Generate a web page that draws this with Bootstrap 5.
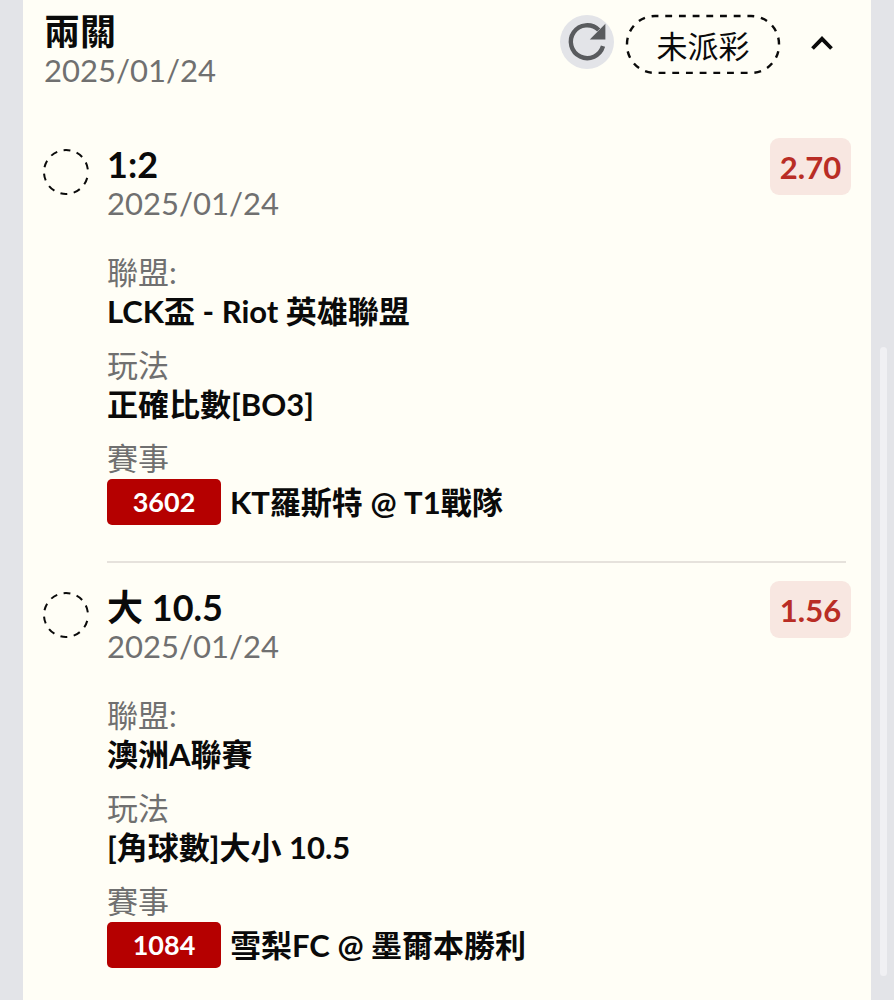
<!DOCTYPE html>
<html lang="zh-Hant">
<head>
<meta charset="utf-8">
<meta name="viewport" content="width=device-width, initial-scale=1">
<title>兩關</title>
<link href="https://cdn.jsdelivr.net/npm/bootstrap@5.3.0/dist/css/bootstrap.min.css" rel="stylesheet">
<style>
  body { background: #e3e4e8; color: #0a0a0a; font-family: Lato, "Noto Sans CJK TC", sans-serif; font-size: 31px; line-height: 38px; }
  .slip { background: #fffef6; min-height: 100vh; margin: 0 23px; padding: 12px 20px 32px; }
  .slip-head { margin: 0 0 49px 1px; }
  .slip-actions { margin-right: 7px; gap: 11px; padding-top: 2px; }
  .heading { font-size: 36px; line-height: 39px; font-weight: 700; margin: 0; }
  .muted-text { color: #707070; }
  .refresh { width: 54px; height: 54px; margin-bottom: 4px; background: #e3e4e8; }
  .status-pill { width: 156px; height: 60px; line-height: 64px; }
  .status-pill svg { position: absolute; inset: 0; width: 100%; height: 100%; }
  .toggle { width: 44px; height: 54px; margin: 0 0 3px 8px; }
  .leg { gap: 18px; }
  .leg-mark { width: 46px; height: 46px; margin-top: 11px; }
  .leg-main { padding-top: 7px; }
  .odds { width: 81px; height: 57px; line-height: 59px; border-radius: 9px; background: #f8e7e1; color: #b92d25; font-weight: 700; }
  .facts { margin: 31px 0 0; }
  .facts dt { font-weight: 400; color: #707070; }
  .facts dd { font-weight: 700; line-height: 40px; margin: 0 0 15px; }
  .facts dd.match { margin: 2px 0 0; gap: 9px; line-height: 46px; }
  .match-no { width: 114px; height: 46px; line-height: 46px; border-radius: 5px; background: #b50000; color: #fff; font-size: 27px; }
  .rule { height: 2px; margin: 36px 5px 18px 64px; background: #e6e2dc; border: 0; opacity: 1; }
  .thumb { position: fixed; right: 7px; top: 347px; bottom: 24px; width: 7px; border-radius: 4px; background: #f0f0f3; }
</style>
</head>
<body>
<main class="slip">
  <header class="slip-head d-flex justify-content-between align-items-start">
    <div>
      <h1 class="heading">兩關</h1>
      <div class="muted-text">2025/01/24</div>
    </div>
    <div class="slip-actions d-flex align-items-center">
      <button type="button" class="refresh btn p-0 border-0 rounded-circle d-flex align-items-center justify-content-center" aria-label="重新整理">
        <svg width="54" height="54" viewBox="0 0 54 54" aria-hidden="true">
          <path d="M43 31.2A16.4 16.4 0 1 1 38.7 15" fill="none" stroke="#595b5e" stroke-width="4.4"/>
          <path d="M45.4 8.8V24.6H29.8Z" fill="#595b5e"/>
        </svg>
      </button>
      <span class="status-pill position-relative text-center">
        <svg aria-hidden="true"><rect x="2" y="2" width="152" height="57" rx="28" fill="none" stroke="#0a0a0a" stroke-width="2.4" pathLength="378" stroke-dasharray="7 7" stroke-dashoffset="3.5"/></svg>
        未派彩
      </span>
      <button type="button" class="toggle btn p-0 border-0 d-flex align-items-center justify-content-center" aria-label="收合" aria-expanded="true">
        <svg width="24" height="16" viewBox="0 0 24 16" fill="none" aria-hidden="true"><path d="M2.5 13.5 12 3.8l9.5 9.7" stroke="#0a0a0a" stroke-width="3.8"/></svg>
      </button>
    </div>
  </header>

  <section class="leg d-flex align-items-start">
    <svg class="leg-mark flex-shrink-0" viewBox="0 0 46 46" aria-hidden="true"><circle cx="23" cy="23" r="22" fill="none" stroke="#0a0a0a" stroke-width="2" stroke-dasharray="7 6.5" stroke-dashoffset="-6"/></svg>
    <div class="leg-main flex-grow-1">
      <h2 class="heading">1:2</h2>
      <div class="muted-text">2025/01/24</div>
      <dl class="facts">
        <dt>聯盟:</dt>
        <dd>LCK盃 - Riot 英雄聯盟</dd>
        <dt>玩法</dt>
        <dd>正確比數[BO3]</dd>
        <dt>賽事</dt>
        <dd class="match d-flex align-items-center"><span class="match-no text-center">3602</span><span>KT羅斯特 @ T1戰隊</span></dd>
      </dl>
    </div>
    <span class="odds text-center flex-shrink-0">2.70</span>
  </section>

  <hr class="rule">

  <section class="leg d-flex align-items-start">
    <svg class="leg-mark flex-shrink-0" viewBox="0 0 46 46" aria-hidden="true"><circle cx="23" cy="23" r="22" fill="none" stroke="#0a0a0a" stroke-width="2" stroke-dasharray="7 6.5" stroke-dashoffset="-6"/></svg>
    <div class="leg-main flex-grow-1">
      <h2 class="heading">大 10.5</h2>
      <div class="muted-text">2025/01/24</div>
      <dl class="facts">
        <dt>聯盟:</dt>
        <dd>澳洲A聯賽</dd>
        <dt>玩法</dt>
        <dd>[角球數]大小 10.5</dd>
        <dt>賽事</dt>
        <dd class="match d-flex align-items-center"><span class="match-no text-center">1084</span><span>雪梨FC @ 墨爾本勝利</span></dd>
      </dl>
    </div>
    <span class="odds text-center flex-shrink-0">1.56</span>
  </section>
</main>
<div class="thumb" aria-hidden="true"></div>
<script src="https://cdn.jsdelivr.net/npm/bootstrap@5.3.0/dist/js/bootstrap.bundle.min.js"></script>
</body>
</html>
